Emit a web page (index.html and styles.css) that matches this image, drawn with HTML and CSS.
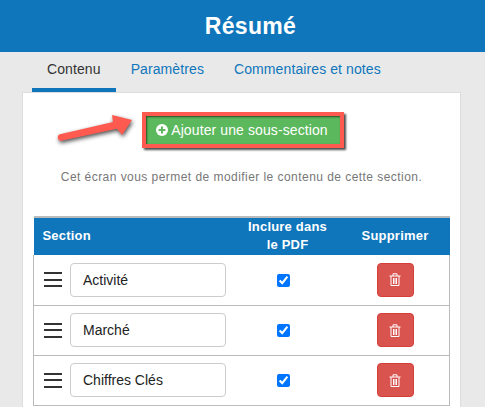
FILE: index.html
```html
<!DOCTYPE html>
<html lang="fr">
<head>
    <meta charset="UTF-8">
    <meta name="viewport" content="width=device-width, initial-scale=1.0">
    <title>Résumé</title>
    <link rel="stylesheet" href="styles.css">
</head>
<body>
    <header class="page-header">
        <h1>Résumé</h1>
    </header>

    <nav class="tabs">
        <a href="#" class="tab active">Contenu</a>
        <a href="#" class="tab">Paramètres</a>
        <a href="#" class="tab">Commentaires et notes</a>
    </nav>

    <main class="panel">
        <!-- Annotation arrow lying over the panel -->
        <svg class="arrow" width="84" height="34" viewBox="0 0 84 34">
            <path d="M3 23.5 L57 11 L56 4 L76 9 L66 24 L61 17.7 L4 30 Q0 27 3 23.5 Z" fill="#ff5a4f"/>
        </svg>

        <div class="add-row">
            <button class="add-button" type="button">
                <svg class="plus-icon" width="12" height="12" viewBox="0 0 12 12">
                    <circle cx="6" cy="6" r="6" fill="#fff"/>
                    <path d="M6 2.6 V9.4 M2.6 6 H9.4" stroke="#5cb85c" stroke-width="2"/>
                </svg>
                Ajouter une sous-section
            </button>
        </div>

        <p class="intro">Cet écran vous permet de modifier le contenu de cette section.</p>

        <table class="sections">
            <thead>
                <tr>
                    <th class="col-section">Section</th>
                    <th class="col-include">Inclure dans le PDF</th>
                    <th class="col-delete">Supprimer</th>
                </tr>
            </thead>
            <tbody>
                <tr>
                    <td>
                        <div class="section-cell">
                            <span class="handle"><i></i><i></i><i></i></span>
                            <input type="text" value="Activité">
                        </div>
                    </td>
                    <td class="center check-cell"><input type="checkbox" checked></td>
                    <td class="center">
                        <button class="delete-button" type="button">
                            <svg width="12" height="13" viewBox="0 0 12 13" fill="none" stroke="#fff">
                                <path d="M0.5 3 H11.5 M2 3 V12.5 H10 V3 M4 3 V0.8 H8 V3 M4.5 5 V11 M6 5 V11 M7.5 5 V11"/>
                            </svg>
                        </button>
                    </td>
                </tr>
                <tr>
                    <td>
                        <div class="section-cell">
                            <span class="handle"><i></i><i></i><i></i></span>
                            <input type="text" value="Marché">
                        </div>
                    </td>
                    <td class="center check-cell"><input type="checkbox" checked></td>
                    <td class="center">
                        <button class="delete-button" type="button">
                            <svg width="12" height="13" viewBox="0 0 12 13" fill="none" stroke="#fff">
                                <path d="M0.5 3 H11.5 M2 3 V12.5 H10 V3 M4 3 V0.8 H8 V3 M4.5 5 V11 M6 5 V11 M7.5 5 V11"/>
                            </svg>
                        </button>
                    </td>
                </tr>
                <tr>
                    <td>
                        <div class="section-cell">
                            <span class="handle"><i></i><i></i><i></i></span>
                            <input type="text" value="Chiffres Clés">
                        </div>
                    </td>
                    <td class="center check-cell"><input type="checkbox" checked></td>
                    <td class="center">
                        <button class="delete-button" type="button">
                            <svg width="12" height="13" viewBox="0 0 12 13" fill="none" stroke="#fff">
                                <path d="M0.5 3 H11.5 M2 3 V12.5 H10 V3 M4 3 V0.8 H8 V3 M4.5 5 V11 M6 5 V11 M7.5 5 V11"/>
                            </svg>
                        </button>
                    </td>
                </tr>
            </tbody>
        </table>
    </main>
</body>
</html>
```

FILE: styles.css
```css
html, body {
    height: 100%;
    overflow: hidden;
}

body {
    margin: 0;
    font-family: "Liberation Sans", Arial, sans-serif;
    background: #e9e9e9;
}

.page-header {
    height: 52px;
    background-color: #0f76bc;
    color: #fff;
    display: flex;
    align-items: center;
    justify-content: center;
    padding-left: 16px;
}

.page-header h1 {
    margin: 0;
    font-size: 23px;
    font-weight: bold;
    letter-spacing: 0.3px;
}

.tabs {
    display: flex;
    height: 40px;
    padding-left: 32px;
}

.tab {
    padding: 8px 15px 0;
    font-size: 14px;
    line-height: 18px;
    letter-spacing: 0.1px;
    color: #0f76bc;
    text-decoration: none;
    box-sizing: border-box;
}

.tab.active {
    color: #333;
    border-bottom: 4px solid #0f76bc;
}

.panel {
    position: relative;
    width: 439px;
    height: 400px;
    margin-left: 22px;
    padding: 19px 10px 0;
    box-sizing: border-box;
    background: #fff;
    border: 1px solid #ddd;
}

.arrow {
    position: absolute;
    left: 33px;
    top: 18px;
    filter: drop-shadow(1px 2px 2px rgba(0, 0, 0, 0.7));
}

.add-row {
    padding-left: 109px;
}

.add-button {
    display: block;
    width: 202px;
    height: 36px;
    padding: 0 0 0 10px;
    text-align: left;
    font-family: inherit;
    font-size: 14px;
    letter-spacing: 0.1px;
    color: #fff;
    background-color: #5cb85c;
    border: 4px solid #ff5a4f;
    box-shadow: 2px 2px 2px rgba(0, 0, 0, 0.7), inset 1px 1px 2px rgba(0, 0, 0, 0.6);
    box-sizing: border-box;
}

.plus-icon {
    vertical-align: -1px;
}

.intro {
    margin: 21px 0 0;
    text-align: center;
    font-size: 12px;
    line-height: 17px;
    color: #777;
    letter-spacing: 0.45px;
}

.sections {
    width: 416px;
    margin-top: 30px;
    table-layout: fixed;
    border-collapse: collapse;
    border-top: 2px solid #bbb;
}

.sections th {
    height: 38px;
    padding: 0 0 1px;
    box-sizing: border-box;
    background-color: #0f76bc;
    color: #fff;
    font-size: 13px;
    line-height: 18px;
    letter-spacing: 0.2px;
    text-align: center;
}

.sections th.col-section {
    width: 193px;
    padding-left: 9px;
    text-align: left;
}

.sections th.col-include {
    width: 115px;
    padding: 0 10px 1px 17px;
}

.sections th.col-delete {
    width: 108px;
    padding-right: 1px;
}

.sections td {
    height: 50px;
    padding: 0;
    border-bottom: 1px solid #bbb;
    box-sizing: border-box;
}

.sections td:first-child {
    border-left: 1px solid #bbb;
}

.sections td:last-child {
    border-right: 1px solid #bbb;
}

.sections td.check-cell {
    padding-right: 2px;
}

.center {
    text-align: center;
}

.section-cell {
    display: flex;
    align-items: center;
    gap: 8px;
    padding-left: 10px;
}

.handle {
    display: flex;
    flex-direction: column;
    gap: 4.5px;
    width: 18px;
}

.handle i {
    display: block;
    height: 2px;
    background: #333;
}

.section-cell input {
    width: 156px;
    height: 34px;
    padding: 0 12px;
    box-sizing: border-box;
    font-family: inherit;
    font-size: 14px;
    color: #222;
    border: 1px solid #ccc;
    border-radius: 4px;
}

.center input {
    width: 13px;
    height: 13px;
    margin: 0;
    vertical-align: middle;
}

.delete-button {
    display: inline-flex;
    align-items: center;
    justify-content: center;
    width: 37px;
    height: 34px;
    padding: 0;
    vertical-align: middle;
    background-color: #d9534f;
    border: 1px solid #d43f3a;
    border-radius: 4px;
}
```
